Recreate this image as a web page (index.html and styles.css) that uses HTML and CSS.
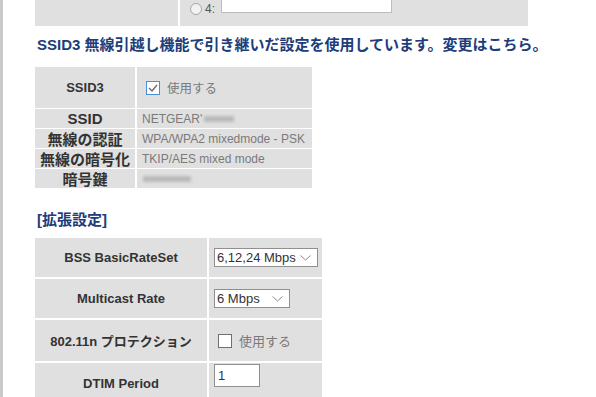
FILE: index.html
```html
<!DOCTYPE html>
<html lang="ja">
<head>
<meta charset="utf-8">
<link rel="stylesheet" href="styles.css">
</head>
<body>
<div class="page">
  <div class="tbl tbl-top">
    <div class="cell head"></div>
    <div class="cell val top-val">
      <span class="radio"></span><span class="radio-label">4:</span>
      <span class="text-input wide"></span>
    </div>
  </div>

  <h2 class="heading h-ssid">SSID3 無線引越し機能で引き継いだ設定を使用しています。変更はこちら。</h2>

  <div class="tbl tbl-ssid">
    <div class="cell head lbl-sm">SSID3</div>
    <div class="cell val first-val">
      <span class="check checked"><svg width="10" height="8" viewBox="0 0 10 8"><polyline points="1,4 4,7 9,1" fill="none" stroke="#6a6a6a" stroke-width="1.3"/></svg></span>
      <span class="use">使用する</span>
    </div>
    <div class="cell head">SSID</div>
    <div class="cell val small">NETGEAR'<span class="blur b1"></span></div>
    <div class="cell head">無線の認証</div>
    <div class="cell val small">WPA/WPA2 mixedmode - PSK</div>
    <div class="cell head">無線の暗号化</div>
    <div class="cell val small">TKIP/AES mixed mode</div>
    <div class="cell head">暗号鍵</div>
    <div class="cell val small"><span class="blur b2"></span></div>
  </div>

  <h2 class="heading h-ext">[拡張設定]</h2>

  <div class="tbl tbl-ext">
    <div class="cell head lbl">BSS BasicRateSet</div>
    <div class="cell val ext-val">
      <div class="select s1"><span>6,12,24 Mbps</span><svg width="11" height="6" viewBox="0 0 11 6"><polyline points="0.5,0.5 5.5,5 10.5,0.5" fill="none" stroke="#8a8a8a" stroke-width="1"/></svg></div>
    </div>
    <div class="cell head lbl">Multicast Rate</div>
    <div class="cell val ext-val">
      <div class="select s2"><span>6 Mbps</span><svg width="11" height="6" viewBox="0 0 11 6"><polyline points="0.5,0.5 5.5,5 10.5,0.5" fill="none" stroke="#8a8a8a" stroke-width="1"/></svg></div>
    </div>
    <div class="cell head lbl">802.11n プロテクション</div>
    <div class="cell val ext-val">
      <span class="check plain"></span><span class="use use2">使用する</span>
    </div>
    <div class="cell head lbl last-head">DTIM Period</div>
    <div class="cell val ext-val last-val">
      <span class="text-input dtim">1</span>
    </div>
  </div>
</div>
</body>
</html>
```

FILE: styles.css
```css
html, body {
  margin: 0;
  padding: 0;
  background: #ffffff;
}

body {
  font-family: "Liberation Sans", "Noto Sans CJK JP", sans-serif;
  color: #333333;
}

.page {
  border-left: 3px solid #c9c9c9;
  padding-left: 32px;
  box-sizing: border-box;
  overflow: hidden;
  height: 397px;
}

.tbl {
  display: grid;
}

.cell {
  background: #e0e0e0;
  display: flex;
  align-items: center;
}

.head {
  justify-content: center;
  font-weight: bold;
  color: #333333;
}

/* top partial table */
.tbl-top {
  grid-template-columns: 143px 348px;
  column-gap: 2px;
  margin-top: -8px;
  width: 493px;
}

.top-val {
  padding: 2px 0 13px 10px;
  height: 19px;
}

.radio {
  width: 12px;
  height: 12px;
  border: 1px solid #a8a8a8;
  border-radius: 50%;
  background: #f2f2f2;
  box-sizing: border-box;
  margin-top: 10px;
}

.radio-label {
  font-size: 12px;
  color: #555555;
  margin-left: 3px;
  margin-top: 10px;
}

.text-input {
  display: inline-flex;
  align-items: center;
  background: #ffffff;
  border: 1px solid #a0a0a0;
  box-sizing: border-box;
}

.text-input.wide {
  width: 171px;
  height: 19px;
  margin-left: 6px;
  border-color: #bdbdbd;
}

/* headings */
.heading {
  margin: 0;
  font-size: 15px;
  line-height: 20px;
  font-weight: bold;
  color: #203d7a;
  padding-left: 2px;
}

.h-ssid {
  margin-top: 9px;
  margin-bottom: 12px;
}

.h-ext {
  margin-top: 22px;
  margin-bottom: 8px;
}

/* ssid table */
.tbl-ssid {
  grid-template-columns: 100px 175px;
  grid-template-rows: 41px 19px 19px 19px 19px;
  column-gap: 2px;
  row-gap: 1px;
  width: 277px;
}

.tbl-ssid .head {
  font-size: 15px;
}

.tbl-ssid .head.lbl-sm {
  font-size: 13px;
}

.first-val {
  padding-left: 9px;
}

.check {
  width: 14px;
  height: 14px;
  box-sizing: border-box;
  background: #ffffff;
  display: inline-flex;
  align-items: center;
  justify-content: center;
}

.check.checked {
  border: 1px solid #4b8fd8;
}

.check.plain {
  border: 1px solid #6f6f6f;
  margin-left: 4px;
}

.use {
  font-family: "Noto Sans CJK JP", sans-serif;
  font-size: 12.5px;
  color: #7a7a7a;
  margin-left: 7px;
}

.use2 {
  font-size: 13px;
  margin-left: 7px;
}

.small {
  font-size: 12px;
  color: #7a7a7a;
  padding-left: 5px;
}

.blur {
  display: inline-block;
  background: #b9b9b9;
  filter: blur(1.5px);
  height: 6px;
}

.b1 {
  width: 30px;
  margin-left: 2px;
}

.b2 {
  width: 48px;
  margin-left: 1px;
}

/* extended table */
.tbl-ext {
  grid-template-columns: 172px 113px;
  grid-template-rows: 39px 39px 41px 40px;
  column-gap: 2px;
  row-gap: 2px;
  width: 287px;
}

.tbl-ext .head {
  font-size: 13px;
}

.ext-val {
  padding-left: 5px;
}

.last-head {
  align-items: flex-start;
  padding-top: 13px;
}

.last-val {
  align-items: flex-start;
  padding-top: 1px;
}

.select {
  height: 19px;
  background: #ffffff;
  border: 1px solid #8f8f8f;
  box-sizing: border-box;
  display: flex;
  align-items: center;
  justify-content: space-between;
  padding: 0 6px 0 2px;
  font-size: 13px;
  color: #333333;
}

.s1 {
  width: 104px;
}

.s2 {
  width: 76px;
}

.text-input.dtim {
  width: 46px;
  height: 23px;
  border-color: #8f8f8f;
  font-size: 13px;
  padding-left: 3px;
  color: #333333;
}
```
